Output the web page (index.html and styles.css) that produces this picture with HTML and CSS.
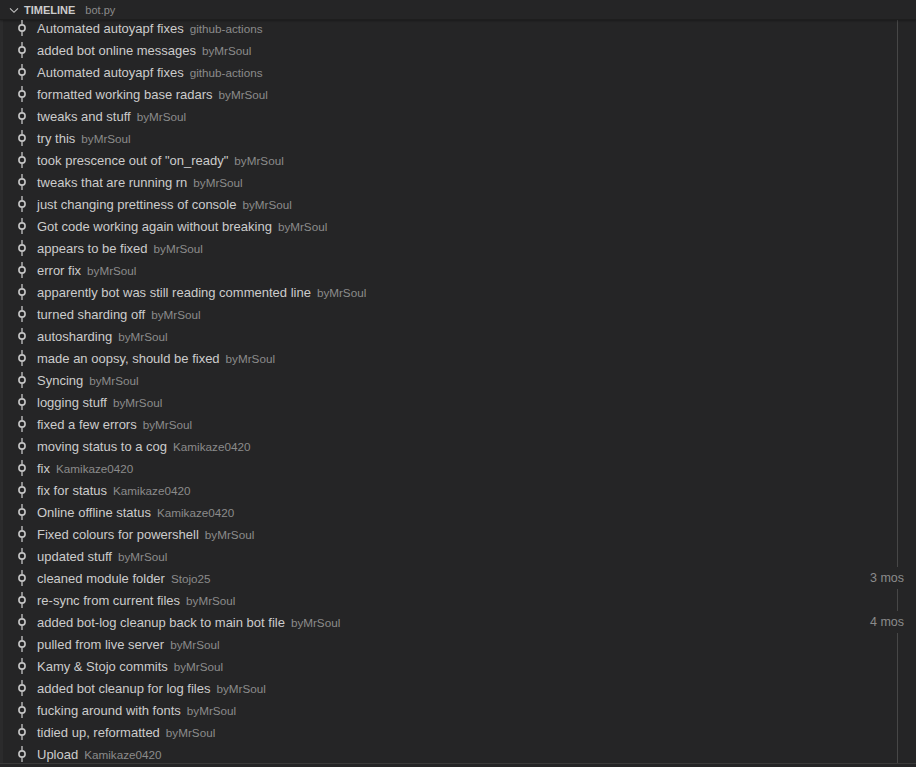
FILE: index.html
```html
<!DOCTYPE html>
<html>
<head>
<meta charset="utf-8">
<link rel="stylesheet" href="styles.css">
</head>
<body>
<div class="panel">
  <div class="header">
    <svg class="chev" width="16" height="16" viewBox="0 0 16 16"><path d="M4 6.3 L8 10.3 L12 6.3" fill="none" stroke="#c5c5c5" stroke-width="1.1"/></svg>
    <span class="title">TIMELINE</span>
    <span class="file">bot.py</span>
  </div>
  <div class="list" id="list"></div>
  <div class="guide"></div>
</div>
<script src="app.js"></script>
</body>
</html>
```

FILE: app.js
```js
const items = [
  ["Automated autoyapf fixes","github-actions",""],
  ["added bot online messages","byMrSoul",""],
  ["Automated autoyapf fixes","github-actions",""],
  ["formatted working base radars","byMrSoul",""],
  ["tweaks and stuff","byMrSoul",""],
  ["try this","byMrSoul",""],
  ["took prescence out of \"on_ready\"","byMrSoul",""],
  ["tweaks that are running rn","byMrSoul",""],
  ["just changing prettiness of console","byMrSoul",""],
  ["Got code working again without breaking","byMrSoul",""],
  ["appears to be fixed","byMrSoul",""],
  ["error fix","byMrSoul",""],
  ["apparently bot was still reading commented line","byMrSoul",""],
  ["turned sharding off","byMrSoul",""],
  ["autosharding","byMrSoul",""],
  ["made an oopsy, should be fixed","byMrSoul",""],
  ["Syncing","byMrSoul",""],
  ["logging stuff","byMrSoul",""],
  ["fixed a few errors","byMrSoul",""],
  ["moving status to a cog","Kamikaze0420",""],
  ["fix","Kamikaze0420",""],
  ["fix for status","Kamikaze0420",""],
  ["Online offline status","Kamikaze0420",""],
  ["Fixed colours for powershell","byMrSoul",""],
  ["updated stuff","byMrSoul",""],
  ["cleaned module folder","Stojo25","3 mos"],
  ["re-sync from current files","byMrSoul",""],
  ["added bot-log cleanup back to main bot file","byMrSoul","4 mos"],
  ["pulled from live server","byMrSoul",""],
  ["Kamy & Stojo commits","byMrSoul",""],
  ["added bot cleanup for log files","byMrSoul",""],
  ["fucking around with fonts","byMrSoul",""],
  ["tidied up, reformatted","byMrSoul",""],
  ["Upload","Kamikaze0420",""]
];
const icon = '<svg class="ico" width="16" height="16" viewBox="0 0 16 16"><path d="M8 0v4.3M8 11.7V16" stroke="#c5c5c5" stroke-width="1.3"/><circle cx="8" cy="8" r="3.1" fill="none" stroke="#c5c5c5" stroke-width="1.6"/></svg>';
const list = document.getElementById('list');
list.innerHTML = items.map(([l,d,t]) =>
  `<div class="row">${icon}<span class="label"></span><span class="desc"></span>${t ? `<span class="time">${t}</span>` : ''}</div>`
).join('');
[...list.children].forEach((row,i) => {
  row.querySelector('.label').textContent = items[i][0];
  row.querySelector('.desc').textContent = items[i][1];
});
```

FILE: styles.css
```css
html, body {
  margin: 0;
  padding: 0;
  background: #252526;
}
body {
  width: 916px;
  height: 767px;
  overflow: hidden;
  font-family: "Segoe UI", "Liberation Sans", sans-serif;
  color: #cccccc;
}
.panel {
  position: relative;
  height: 763px;
  border-bottom: 1px solid #3a3a3a;
  box-shadow: inset 3px 0 0 #2b2b2c;
}
.header {
  height: 19px;
  border-bottom: 1px solid #1e1e1e;
  display: flex;
  align-items: center;
  padding-left: 6px;
  background: #252526;
  box-shadow: 0 1px 2px rgba(0,0,0,0.3);
  position: relative;
  z-index: 1;
}
.chev { flex: none; }
.title {
  font-size: 11px;
  font-weight: bold;
  margin-left: 2px;
  color: #cccccc;
}
.file {
  font-size: 11px;
  color: #8b8b8b;
  margin-left: 10px;
}
.list {
  display: flex;
  flex-direction: column;
  margin-top: -3px;
}
.row {
  height: 22px;
  display: flex;
  align-items: center;
  padding-left: 14px;
  padding-right: 12px;
  font-size: 13px;
  white-space: nowrap;
  position: relative;
  z-index: 1;
}
.ico { flex: none; margin-right: 7px; }
.desc {
  font-size: 11.7px;
  color: #8b8b8b;
  margin-left: 6px;
}
.time {
  margin-left: auto;
  font-size: 12.5px;
  color: #8b8b8b;
  background: #252526;
  padding-left: 8px;
  line-height: 22px;
}
.guide {
  position: absolute;
  left: 897px;
  top: 20px;
  bottom: 0;
  width: 1px;
  background: #474747;
}
```
